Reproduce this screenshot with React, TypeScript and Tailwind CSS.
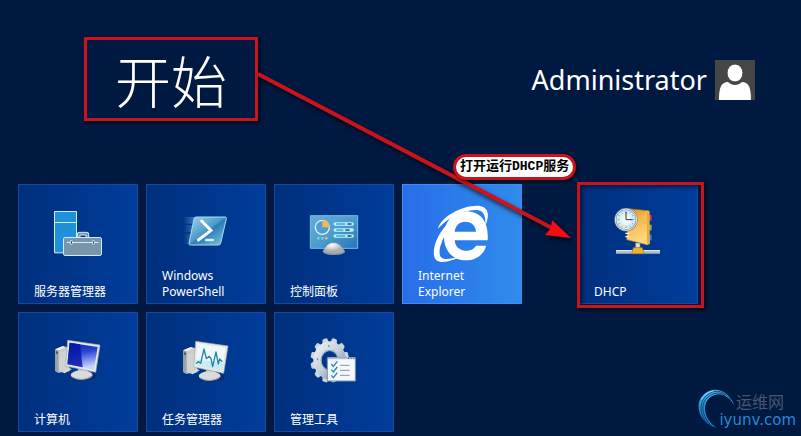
import type { ReactNode } from "react";

type IconProps = { viewBox: string; children: ReactNode };

function TileIcon({ viewBox, children }: IconProps) {
  return (
    <svg className="mx-auto h-16 w-20 shrink-0" viewBox={viewBox} aria-hidden="true">
      {children}
    </svg>
  );
}

function ServerManagerIcon() {
  return (
    <TileIcon viewBox="84 75 240 192">
      <g fill="#1e90dc" stroke="#d4ecfa" strokeWidth="3">
        <path d="M133.500 109.500h66v124h-66zM133.500 142.500h66" />
        <path d="M202 188v-11q0-5 5-5h24q5 0 5 5v11" fill="#7896aa" />
        <path d="M210 187v-7h18v7" fill="#003080" />
        <rect x="160.500" y="187.500" width="114" height="54" rx="5" fill="#7896aa" />
        <path d="M170 202.500h96" />
      </g>
      <g fill="#003a82" stroke="#e4f4ff" strokeWidth="3">
        <rect x="181" y="197" width="6" height="11" rx="2" />
        <rect x="247" y="197" width="6" height="11" rx="2" />
      </g>
    </TileIcon>
  );
}

function PowerShellIcon() {
  return (
    <TileIcon viewBox="78 75 240 192">
      <defs>
        <linearGradient id="ps-face" x1="0" y1="0" x2="1" y2="1">
          <stop offset="0" stopColor="#a4d2ea" />
          <stop offset=".48" stopColor="#4a9ac8" />
          <stop offset=".52" stopColor="#2a7cb4" />
          <stop offset="1" stopColor="#7fcde2" />
        </linearGradient>
        <linearGradient id="ps-trail">
          <stop offset="0" stopColor="#78b4e4" stopOpacity="0" />
          <stop offset="1" stopColor="#78b4e4" stopOpacity=".5" />
        </linearGradient>
      </defs>
      <path d="M132 126h32l-5 20h-28zM134 150h24l-4 22h-22zM131 176h22l-5 31h-18z" fill="url(#ps-trail)" />
      <path d="M168 126h87q5 0 4 5l-17 74q-1 5-7 5h-84q-5 0-4-5l15-73q1-6 6-6z" fill="url(#ps-face)" stroke="#a9dcf1" strokeWidth="3" />
      <path d="M185 138l28 28-38 29" fill="none" stroke="#fff" strokeWidth="9" strokeLinecap="round" />
      <path d="M199 195h19" stroke="#d8f2ff" strokeWidth="8" strokeLinecap="round" />
    </TileIcon>
  );
}

function ControlPanelIcon() {
  return (
    <TileIcon viewBox="78 75 240 192">
      <defs>
        <linearGradient id="cp-face" x1="0" y1="0" x2="1" y2="1">
          <stop offset="0" stopColor="#65add8" />
          <stop offset=".5" stopColor="#4e9ccd" />
          <stop offset="1" stopColor="#2475b6" />
        </linearGradient>
        <radialGradient id="cp-foot" cx=".4" cy=".2">
          <stop offset="0" stopColor="#fff" />
          <stop offset="1" stopColor="#a9adb0" />
        </radialGradient>
      </defs>
      <path d="M127 122h142v98H127z" fill="url(#cp-face)" stroke="#79bce2" strokeWidth="3" />
      <circle cx="163" cy="157" r="21" fill="#509ed0" stroke="#d7f3ff" strokeWidth="4" />
      <path d="M163 157v-22q21 0 23 22z" fill="#f2b65c" />
      <g strokeLinecap="round">
        <path d="M202 147h50M202 165h50M202 183h50" stroke="#baf3ff" strokeWidth="11" />
        <path d="M206 147h24M206 165h18M206 183h24" stroke="#39a9d5" strokeWidth="5" />
        <path d="M240 147h9M234 165h9M240 183h9" stroke="#214f77" strokeWidth="5" />
      </g>
      <circle cx="151" cy="190" r="3" fill="#40bdec" stroke="#a2eaff" strokeWidth="2" />
      <circle cx="163" cy="190" r="3" fill="#40bdec" stroke="#a2eaff" strokeWidth="2" />
      <circle cx="175" cy="190" r="3" fill="#f1a836" stroke="#e1d3b6" strokeWidth="2" />
      <path d="M164 228c5-3 12-25 33-25s29 22 34 25c3 16-67 16-67 0z" fill="url(#cp-foot)" />
      <path d="M166 231q32 14 64 0" stroke="#777c80" strokeWidth="2" fill="none" />
    </TileIcon>
  );
}

function ExplorerIcon() {
  return (
    <TileIcon viewBox="78 165 240 192">
      <g fill="#fff">
        <path
          fillRule="evenodd"
          d="M275 286H176c2 20 15 31 34 31 14 0 25-6 30-15h31c-9 28-31 44-61 44-39 0-65-28-66-68-1-45 25-79 66-79 44 0 69 32 65 87zM176 260h64c-1-18-13-30-32-30-18 0-30 12-32 30z"
        />
        <path d="M126 251c8-35 70-69 117-69 34 0 40 27 25 60 1-31-4-47-29-47-45 1-82 23-113 56z" />
        <path d="M154 237c-34 35-49 85-36 105 13 17 47 8 78-8-30 7-52 13-61 3-11-14 0-47 17-75z" />
      </g>
    </TileIcon>
  );
}

function DhcpIcon() {
  return (
    <TileIcon viewBox="84 75 240 192">
      <defs>
        <linearGradient id="dhcp-book" x1="0" y1="0" x2=".3" y2="1">
          <stop offset="0" stopColor="#d9971f" />
          <stop offset=".4" stopColor="#f2b848" />
          <stop offset="1" stopColor="#ffd783" />
        </linearGradient>
        <radialGradient id="dhcp-clock">
          <stop offset="0" stopColor="#fff" />
          <stop offset="1" stopColor="#c6dfee" />
        </radialGradient>
      </defs>
      <path d="M138 226h132v10H138z" fill="#aeb9c7" />
      <path d="M138 227h132" stroke="#eef4f8" strokeWidth="3" />
      <path d="M197 204h13v15h-13z" fill="#dfe5e8" stroke="#7c8991" strokeWidth="2" />
      <path d="M190 218h27l5 18h-37z" fill="#efb12f" stroke="#ad7316" strokeWidth="2" />
      <path d="M231 120h14v17h-14z" fill="#d93a3d" />
      <path d="M231 149h14v17h-14z" fill="#8fa956" />
      <path d="M231 179h14v17h-14z" fill="#2589cb" />
      <path d="M176 101l59 6 4 98-10 4-59-15z" fill="url(#dhcp-book)" stroke="#a5680e" strokeWidth="2" />
      <path d="M228 108l10 1v98l-8 2z" fill="#eda937" stroke="#fff0bf" strokeWidth="1" />
      <path d="M166 175h12M166 185h12" stroke="#f5f5f5" strokeWidth="4" />
      <circle cx="168" cy="134" r="32" fill="url(#dhcp-clock)" stroke="#7d8b94" strokeWidth="6" />
      <circle cx="168" cy="134" r="32" fill="none" stroke="#dfe8ed" strokeWidth="3" />
      <path d="M168 109v6M168 153v6M143 134h6M187 134h6M155 112l2 4M181 112l-2 4M146 121l4 2M190 121l-4 2M146 147l4-2M190 147l-4-2M155 156l2-4M181 156l-2-4" stroke="#7b8994" strokeWidth="2" />
      <path d="M168 110v24h20" stroke="#243848" strokeWidth="3" fill="none" />
    </TileIcon>
  );
}

function MonitorBase() {
  return (
    <>
      <path d="M136 133l22-10 22 6-2 70-34 4-8-5z" fill="#c9cdce" />
      <path d="M136 133l10 3v67l-10-5z" fill="#9ea4a6" />
      <path d="M136 133l22-9 8 2-20 10z" fill="#f2f2ee" />
      <path d="M150 143v54M155 142v54M160 141v54M165 140v54" stroke="#eff1f1" strokeWidth="1" />
      <path d="M138 139l6 2v7l-6-2z" fill="#29433c" />
      <circle cx="141" cy="144" r="2" fill="#39d149" />
      <path d="M155 201l20-12 11 3-22 13z" fill="#d7dbdb" />
      <ellipse cx="219" cy="213" rx="40" ry="13" fill="#001f55" opacity=".45" />
      <path d="M204 189l27 5 2 16h-30z" fill="#aeb3b5" />
      <ellipse cx="215" cy="210" rx="33" ry="14" fill="#d9dcda" />
      <path d="M184 215q31 18 62-2" stroke="#929899" strokeWidth="3" fill="none" />
      <path d="M173 106l97 14-13 82-90-19z" fill="#e8e8e2" stroke="#a9afb1" strokeWidth="2" />
    </>
  );
}

function ComputerIcon() {
  return (
    <TileIcon viewBox="84 69 240 192">
      <defs>
        <linearGradient id="screen" x1="0" y1="0" x2=".2" y2="1">
          <stop offset="0" stopColor="#0a1cb4" />
          <stop offset=".45" stopColor="#2c48d2" />
          <stop offset="1" stopColor="#c8d3ff" />
        </linearGradient>
      </defs>
      <MonitorBase />
      <path d="M179 113l84 13-11 68-80-16z" fill="url(#screen)" />
      <path d="M179 113l31 5 8 69-46-9z" fill="#0716aa" opacity=".85" />
    </TileIcon>
  );
}

function TaskManagerIcon() {
  return (
    <TileIcon viewBox="78 69 240 192">
      <g transform="translate(-6 3)">
        <MonitorBase />
        <path d="M179 112l83 13-10 69-80-16z" fill="#edf8fb" />
        <path d="M172 160l86 10-6 24-80-16z" fill="#cce9f1" />
      </g>
      <path d="M168 175l8-5 6 5 10-43 7 29 9-7 5 7 5 24 10-44 7 36 4-15 8 8" fill="none" stroke="#2684aa" strokeWidth="4" strokeLinejoin="round" />
    </TileIcon>
  );
}

function AdminToolsIcon() {
  const teeth = [15, 45, 75, 105, 135, 165, 195, 225, 255, 285, 315, 345];
  return (
    <TileIcon viewBox="78 69 240 192">
      <defs>
        <linearGradient id="gear" x1="0" y1="0" x2="1" y2="1">
          <stop offset="0" stopColor="#e6ecf0" />
          <stop offset=".5" stopColor="#c4d1db" />
          <stop offset="1" stopColor="#718ca6" />
        </linearGradient>
      </defs>
      <g transform="translate(185 166) scale(.86 1)">
        {teeth.map((angle) => (
          <path key={angle} d="M-12-50l3-14q1-3 4-3H5q3 0 4 3l3 14z" fill="#cbd6de" transform={`rotate(${angle})`} />
        ))}
        <circle r="43" fill="none" stroke="url(#gear)" strokeWidth="28" />
        <circle r="30" fill="none" stroke="#8fa8bd" strokeWidth="4" />
        <circle cx="-3" cy="-43" r="3" fill="#7890a6" />
        <circle cx="-42" cy="-3" r="3" fill="#7890a6" />
      </g>
      <path d="M178 158h84v70h-84z" fill="#f5f8fa" stroke="#7b94ab" strokeWidth="3" />
      <path d="M180 160h80" stroke="#adc2d4" strokeWidth="5" />
      <path d="M240 160h3M248 160h3M256 160h3" stroke="#34546d" strokeWidth="3" />
      <path d="M216 181h29M216 196h29M216 211h29" stroke="#8c969e" strokeWidth="3" />
      <path d="M190 177l6 7 12-15M190 194l6 7 12-15M190 211l6 7 12-15" stroke="#2089b8" strokeWidth="4" fill="none" />
    </TileIcon>
  );
}

type TileProps = { label: string; icon: ReactNode; bright?: boolean };

function Tile({ label, icon, bright = false }: TileProps) {
  return (
    <button
      type="button"
      className={[
        "flex size-[120px] flex-col justify-between border pt-[15px] pb-[3px] text-left text-xs leading-4 text-white",
        bright
          ? "border-[#438df0] bg-linear-to-r from-[#286de8] to-[#308bec]"
          : "border-[#19499a] bg-linear-to-r from-[#002f7d] to-[#003d9c]"
      ].join(" ")}
    >
      {icon}
      <span className="block w-24 pl-[15px]">{label}</span>
    </button>
  );
}

const tiles: TileProps[] = [
  { label: "服务器管理器", icon: <ServerManagerIcon /> },
  { label: "Windows PowerShell", icon: <PowerShellIcon /> },
  { label: "控制面板", icon: <ControlPanelIcon /> },
  { label: "Internet Explorer", icon: <ExplorerIcon />, bright: true },
  { label: "计算机", icon: <ComputerIcon /> },
  { label: "任务管理器", icon: <TaskManagerIcon /> },
  { label: "管理工具", icon: <AdminToolsIcon /> }
];

function UserButton() {
  return (
    <button type="button" className="flex items-center gap-2 text-[27px] leading-10 text-white">
      <span>Administrator</span>
      <svg className="size-10 bg-[#464646]" viewBox="0 0 40 40" aria-hidden="true">
        <path d="M4 40c0-12 2-18 9-18 4 4 10 4 14 0 7 0 9 6 9 18z" fill="#fff" />
        <ellipse cx="20" cy="13" rx="8" ry="9" fill="#fff" stroke="#464646" />
      </svg>
    </button>
  );
}

function Annotation() {
  return (
    <>
      <svg className="pointer-events-none absolute top-[60px] left-[250px] h-[190px] w-[330px] drop-shadow-[2px_3px_2px_#000b]" viewBox="250 60 330 190" aria-hidden="true">
        <path d="M258 74L552 228" stroke="#c9131d" strokeWidth="4" />
        <path d="M571 238L545 235L551 228L552 220Z" fill="#f70b12" />
      </svg>
      <p className="absolute top-[154px] left-[453px] rounded-full border-3 border-[#c9131d] bg-white px-1 font-['Liberation_Mono','Noto_Sans_CJK_SC',monospace] text-[13px] leading-5 font-bold whitespace-nowrap text-black shadow-[2px_2px_3px_#0008]">
        打开运行DHCP服务
      </p>
    </>
  );
}

function Watermark() {
  return (
    <div className="absolute right-[5px] bottom-2 flex items-end">
      <svg className="-mr-[18px] size-10" viewBox="20 38 120 120" aria-hidden="true">
        <defs>
          <linearGradient id="swirl" x1="0" y1="0" x2="0" y2="1">
            <stop offset="0" stopColor="#49b4ea" />
            <stop offset=".5" stopColor="#2390d8" />
            <stop offset="1" stopColor="#1a6fb8" />
          </linearGradient>
        </defs>
        <path d="M78 157C24 142 8 84 44 54 74 31 116 46 132 90 114 60 86 46 60 66 32 88 42 132 78 157z" fill="url(#swirl)" />
        <g fill="none" stroke="#001941" strokeWidth="2">
          <path d="M50 142C22 112 26 66 66 50 88 43 108 54 122 74" />
          <path d="M62 150C30 116 30 78 60 60 76 50 92 52 106 60" />
        </g>
        <path d="M34 72q10-20 34-25" fill="none" stroke="#8ed8f8" strokeWidth="3" strokeLinecap="round" />
      </svg>
      <div className="relative text-right">
        <p className="pr-3 text-base leading-5 text-[#48566f]">运维网</p>
        <a href="#iyunv" className="block font-['DejaVu_Sans',Verdana,sans-serif] text-[15px] leading-4 text-[#2588d8]">
          iyunv.com
        </a>
      </div>
    </div>
  );
}

export default function App() {
  return (
    <main className="relative min-h-screen overflow-hidden bg-[#001941] pb-1 font-['Noto_Sans','Noto_Sans_CJK_SC',sans-serif]">
      <header className="flex items-start justify-between pt-[37px] pr-[46px] pl-[84px]">
        <h1 className="border-3 border-[#c9131d] px-7 font-['Noto_Sans_CJK_SC',sans-serif] text-[56px] leading-[78px] font-light text-white shadow-[2px_2px_4px_#000a]">
          开始
        </h1>
        <div className="pt-[23px]">
          <UserButton />
        </div>
      </header>

      <div className="mt-[63px] flex items-start gap-14 pl-[18px]">
        <nav className="grid grid-cols-[repeat(4,120px)] gap-2" aria-label="开始">
          {tiles.map((tile) => (
            <Tile key={tile.label} {...tile} />
          ))}
        </nav>
        <div className="relative">
          <Tile label="DHCP" icon={<DhcpIcon />} />
          <div className="pointer-events-none absolute -top-0.5 -right-1.5 -bottom-1 -left-px border-3 border-[#c9131d] shadow-[2px_2px_4px_#000a,inset_2px_2px_4px_#0008]" />
        </div>
      </div>

      <Annotation />
      <Watermark />
    </main>
  );
}
